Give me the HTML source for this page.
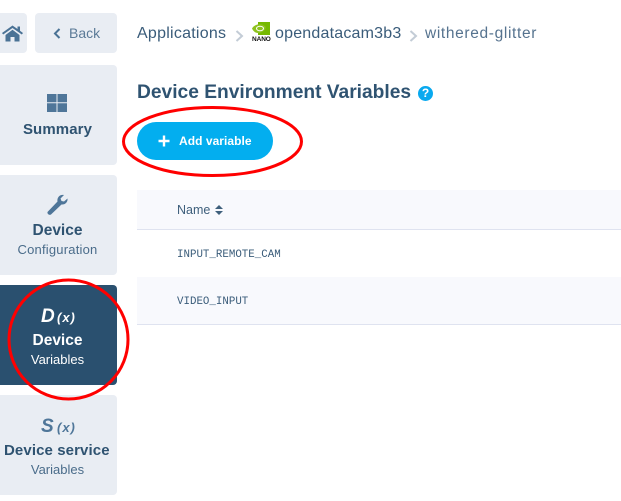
<!DOCTYPE html>
<html><head><meta charset="utf-8"><style>
html,body{margin:0;padding:0;background:#fff}
body{width:621px;height:501px;position:relative;overflow:hidden;font-family:"Liberation Sans",sans-serif;color:#2a506f}
.b{position:absolute;background:#e9edf3;border-radius:4px;box-sizing:border-box}
.t{position:absolute;white-space:nowrap}
.c{left:0;width:115px;text-align:center}
svg{position:absolute;overflow:visible}
</style></head><body>
<div class="b" style="left:-10px;top:13px;width:37px;height:40px"></div>
<div class="b" style="left:35px;top:13px;width:82px;height:40px"></div>
<svg style="left:2px;top:25px" width="21" height="17" viewBox="0 0 21 17"><path d="M0 8 10.500 .5 15.500 4V1.500H18V5.800L21 8 19.800 9.500 10.500 3 1.200 9.500z" fill="#4a7295"/><path d="M3.500 10 10.500 4.700 17.500 10V16.500H12.500V12H8.500V16.500H3.500z" fill="#4a7295"/></svg>
<svg style="left:53px;top:28px" width="8" height="11" viewBox="0 0 8 11"><path d="M6.500 1 2 5.500 6.500 10" fill="none" stroke="#4a7295" stroke-width="2"/></svg>
<div class="t" style="left:69px;top:25px;font-size:14px;color:#5b7a97">Back</div>

<div class="b" style="left:-10px;top:65px;width:127px;height:100px"></div>
<svg style="left:47px;top:94px" width="20" height="18"><path d="M0 0H9.500V8.300H0zM10.500 0H20V8.300H10.500zM0 9.300H9.500V18H0zM10.500 9.300H20V18H10.500z" fill="#4f7699"/></svg>
<div class="t c" style="left:0;top:121px;font-size:15px;font-weight:bold;color:#2f5371;letter-spacing:.1px">Summary</div>

<div class="b" style="left:-10px;top:175px;width:127px;height:100px"></div>
<svg style="left:46px;top:194px" width="22" height="21" viewBox="0 0 22 21"><path d="M21.500 4.500C22 8 19 11 15.500 10.500L5 20.500C3.500 21.500 1 20 1.500 18L11.500 7.500C10.700 3.500 14 0 18 1L14.500 4.500 15.500 7 18 7.500z" fill="#4f7699"/></svg>
<div class="t c" style="top:222px;font-size:15.500px;font-weight:bold;color:#2f5371">Device</div>
<div class="t c" style="top:242px;font-size:13px;color:#4a6c8a;letter-spacing:.2px">Configuration</div>

<div class="b" style="left:-10px;top:285px;width:127px;height:100px;background:#2a506f"></div>
<div class="t" style="left:41px;top:306px;font:italic bold 19px 'Liberation Sans',sans-serif;color:#fff">D</div>
<div class="t" style="left:57px;top:310px;font:italic bold 13px 'Liberation Sans',sans-serif;color:#fff;letter-spacing:1px">(x)</div>
<div class="t c" style="top:332px;font-size:15.500px;font-weight:bold;color:#fff">Device</div>
<div class="t c" style="top:352px;font-size:13px;color:#fff">Variables</div>

<div class="b" style="left:-10px;top:395px;width:127px;height:100px"></div>
<div class="t" style="left:41px;top:416px;font:italic bold 19px 'Liberation Sans',sans-serif;color:#4f7699">S</div>
<div class="t" style="left:57px;top:420px;font:italic bold 13px 'Liberation Sans',sans-serif;color:#4f7699;letter-spacing:1px">(x)</div>
<div class="t" style="left:4px;top:442px;font-size:15px;font-weight:bold;color:#2f5371;letter-spacing:.1px">Device service</div>
<div class="t c" style="top:462px;font-size:13px;color:#4a6c8a">Variables</div>

<div class="t" style="left:137px;top:25px;font-size:16px;color:#3a5c7a;letter-spacing:.25px">Applications</div>
<svg style="left:235px;top:30px" width="9" height="12"><path d="M1.500 1 7 6 1.500 11" fill="none" stroke="#c3ccd6" stroke-width="2"/></svg>
<svg style="left:252px;top:22px" width="18" height="13" viewBox="0 0 18 13"><rect x="6" width="12" height="13" fill="#76b900"/><path d="M0 6.500C2.500 2 9 1 13 4 15.500 6.500 11 11 6 11 3.500 11 1 9 0 6.500z" fill="#8ec21f"/><ellipse cx="8" cy="6.500" rx="3.500" ry="2.300" fill="none" stroke="#fff"/></svg>
<div class="t" style="left:252px;top:36px;font-size:6.500px;font-weight:bold;color:#111;letter-spacing:-.1px">NANO</div>
<div class="t" style="left:275px;top:25px;font-size:16px;color:#3a5c7a;letter-spacing:.2px">opendatacam3b3</div>
<svg style="left:409px;top:30px" width="9" height="12"><path d="M1.500 1 7 6 1.500 11" fill="none" stroke="#c3ccd6" stroke-width="2"/></svg>
<div class="t" style="left:425px;top:25px;font-size:15.500px;color:#56738f;letter-spacing:.65px">withered-glitter</div>

<div class="t" style="left:137px;top:82px;font-size:19.200px;font-weight:bold;color:#2f5371">Device Environment Variables</div>
<div class="t" style="left:418px;top:86px;width:15px;height:15px;border-radius:50%;background:#09a9ef;color:#fff;font-size:12px;font-weight:bold;line-height:15px;text-align:center">?</div>

<div class="t" style="left:137px;top:122px;width:136px;height:38px;border-radius:19px;background:#03aeef"></div>
<svg style="left:158px;top:135px" width="12" height="12"><path d="M6 .5V11.500M.5 6H11.500" stroke="#fff" stroke-width="2.400"/></svg>
<div class="t" style="left:179px;top:134px;font-size:12px;font-weight:bold;color:#fff;letter-spacing:.05px">Add variable</div>

<div class="t" style="left:137px;top:190px;width:484px;height:40px;background:#f8f9fd;border-bottom:1px solid #dfe3f0;box-sizing:border-box"></div>
<div class="t" style="left:177px;top:203px;font-size:12.500px;color:#3e5f7c">Name</div>
<svg style="left:215px;top:205px" width="8" height="10"><path d="M4 0 8 4H0zM4 10 0 6H8z" fill="#3e5f7c"/></svg>
<div class="t" style="left:177px;top:249px;font:10.800px 'Liberation Mono',monospace;color:#3a5c7a">INPUT_REMOTE_CAM</div>
<div class="t" style="left:137px;top:277px;width:484px;height:48px;background:#f8f9fd;border-bottom:1px solid #dfe3f0;box-sizing:border-box"></div>
<div class="t" style="left:177px;top:296px;font:10.800px 'Liberation Mono',monospace;color:#3a5c7a">VIDEO_INPUT</div>

<svg style="left:0;top:0" width="621" height="501"><ellipse cx="212.500" cy="141.500" rx="89" ry="34" fill="none" stroke="#f00" stroke-width="3"/><circle cx="68.500" cy="339.500" r="59.500" fill="none" stroke="#f00" stroke-width="3"/></svg>
</body></html>
